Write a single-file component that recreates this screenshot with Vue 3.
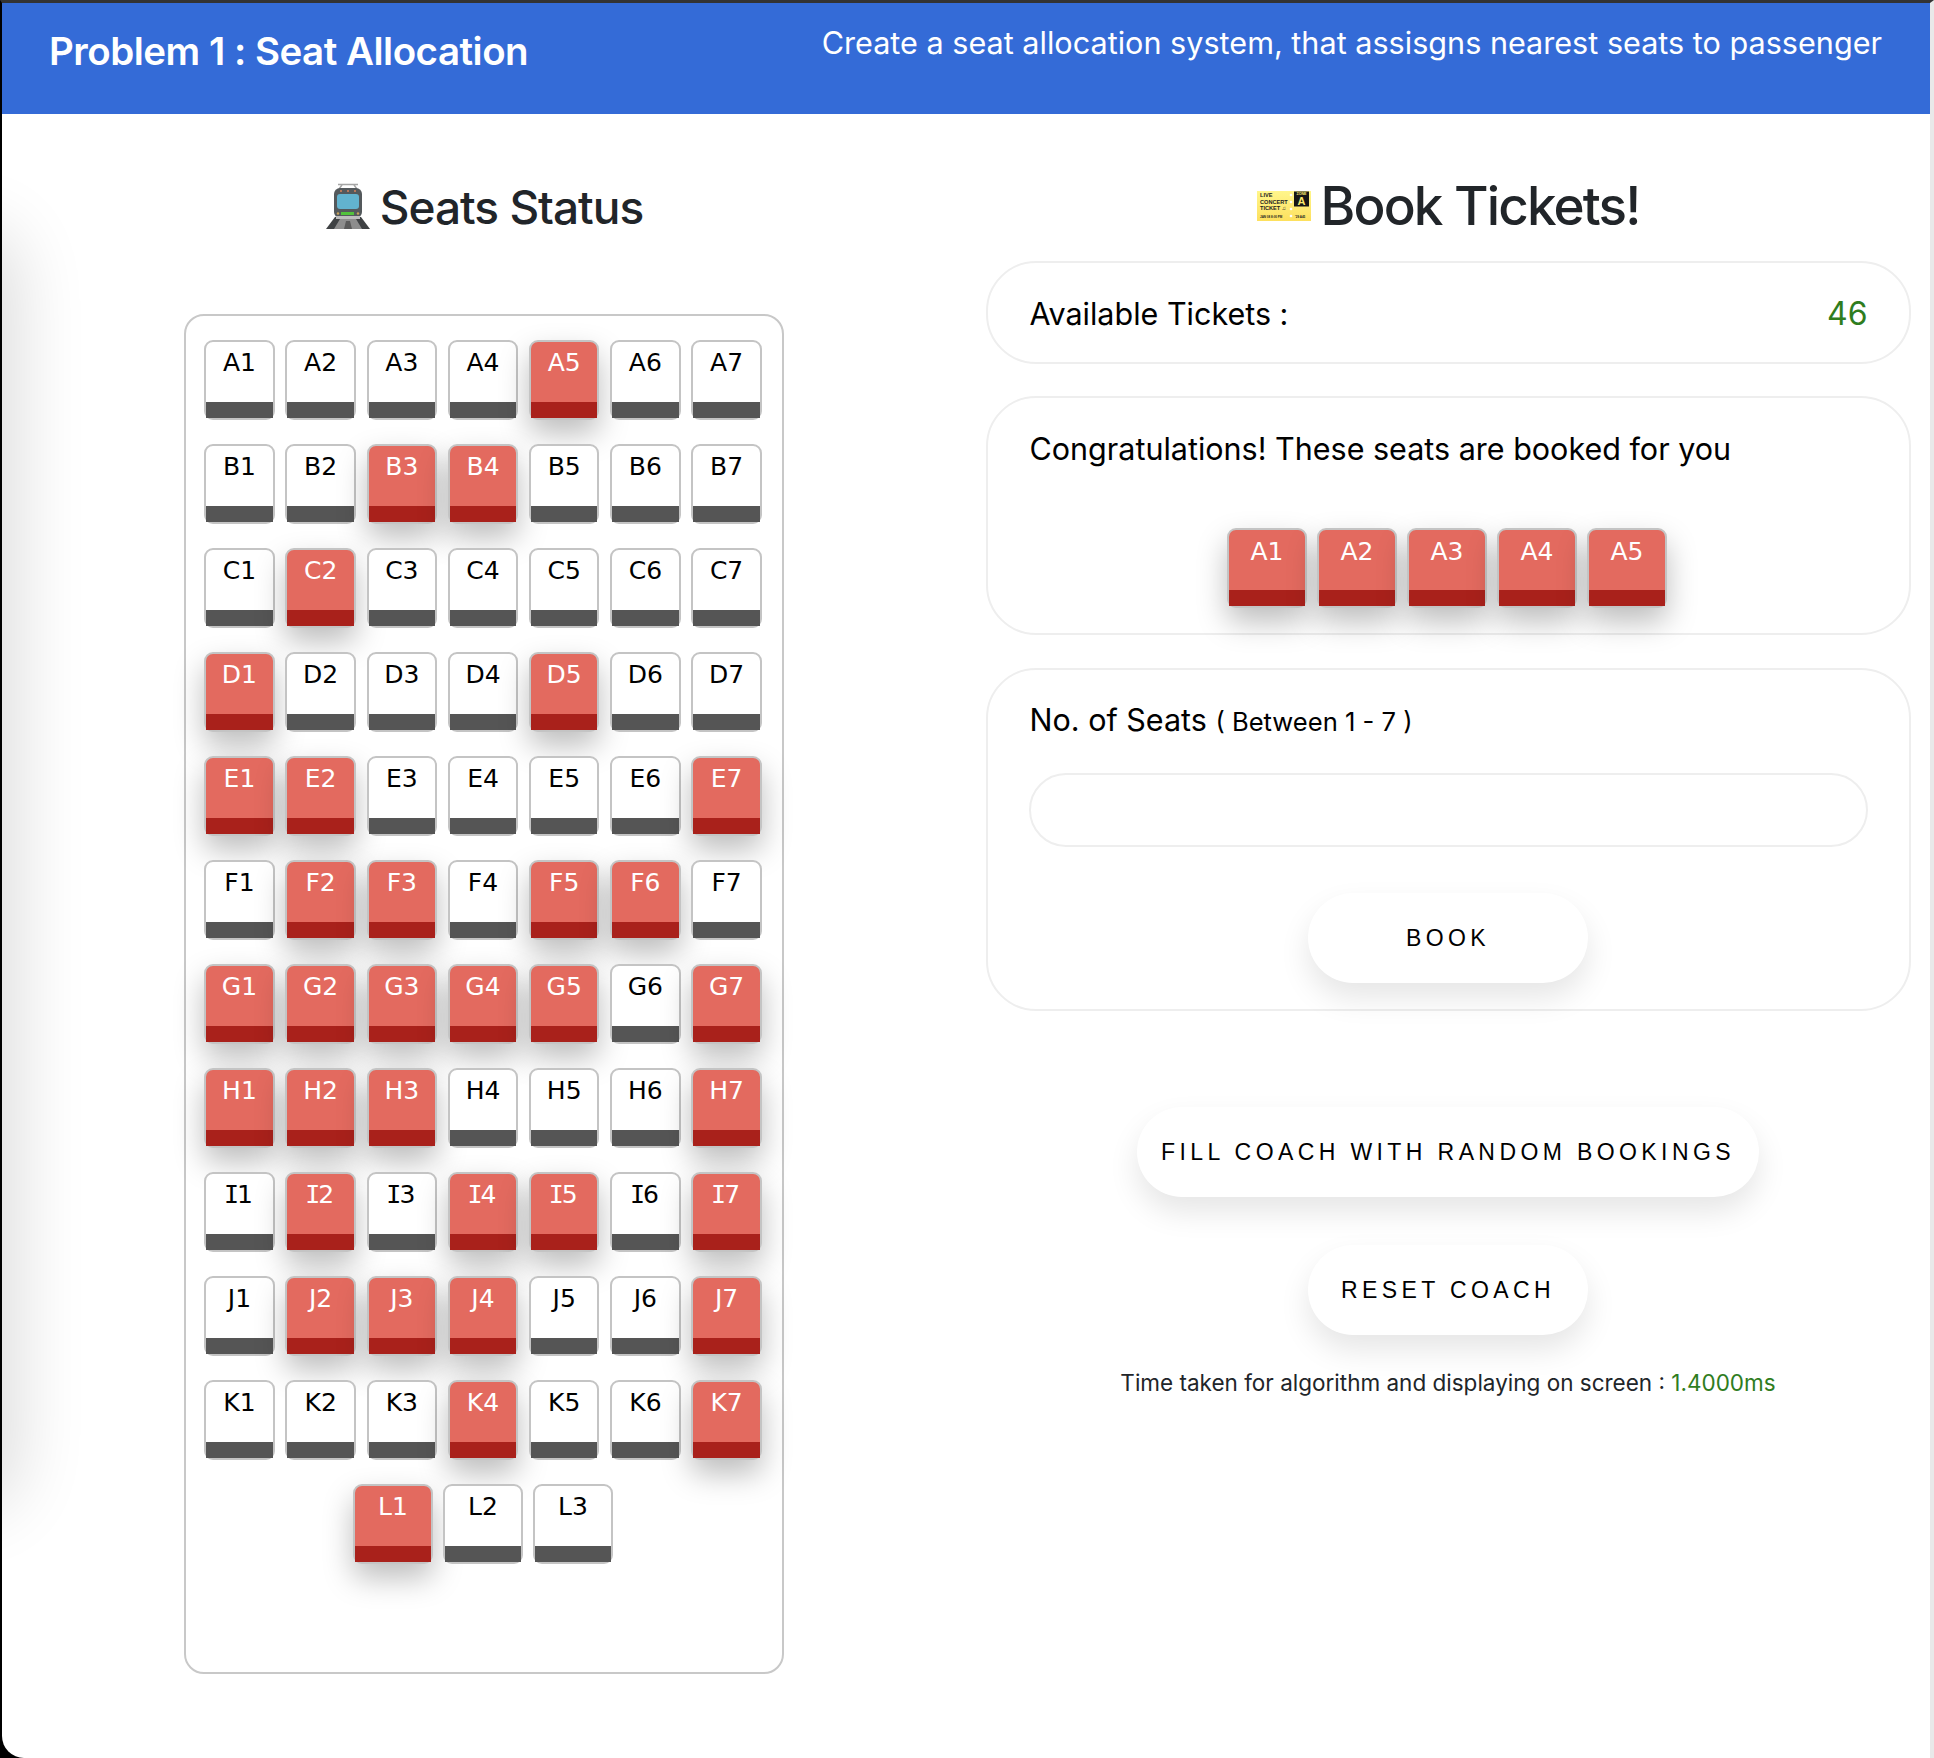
<template>
  <div class="shell">
    <div class="page">
      <header class="top-bar">
        <h1 class="top-title">Problem 1 : Seat Allocation</h1>
        <p class="top-desc">Create a seat allocation system, that assisgns nearest seats to passenger</p>
      </header>

      <main class="content">
        <section class="left-col">
          <h2 class="status-title">
            <svg class="train-icon" viewBox="0 0 44 46" width="44" height="46">
              <path d="M12 1.5h20M16 2l-3 4M28 2l3 4" stroke="#a5a5a5" stroke-width="1.4" fill="none"/>
              <path d="M9 34 L0 46 H44 L35 34Z" fill="#3f4244"/>
              <path d="M14 36 L8 46 H36 L30 36Z" fill="#8d8d8d"/>
              <path d="M20 38 L18 46 H26 L24 38Z" fill="#5a5a5a"/>
              <rect x="8" y="5" width="28" height="30" rx="6" fill="#54595c"/>
              <rect x="11" y="11" width="22" height="15" rx="3" fill="#62b3cf"/>
              <rect x="15" y="29" width="13" height="3" fill="#52c23c"/>
              <circle cx="12" cy="30.5" r="1.2" fill="#c9a45a"/>
              <circle cx="32" cy="30.5" r="1.2" fill="#c9a45a"/>
              <circle cx="15" cy="8" r="1" fill="#d9835a"/>
              <circle cx="22" cy="8" r="1" fill="#d9835a"/>
              <circle cx="29" cy="8" r="1" fill="#d9835a"/>
              <rect x="10" y="33" width="24" height="3" fill="#bdbdbd"/>
            </svg>
            Seats Status
          </h2>
          <div class="coach">
            <div v-for="row in rows" :key="row.name" class="seat-row" :class="{ 'last-row': row.seats.length < 7 }">
              <div v-for="seat in row.seats" :key="seat.num" class="seat" :class="{ booked: seat.booked }">
                <span :class="{ 'letter-i': row.name === 'I' }">{{ row.name }}</span>{{ seat.num }}
              </div>
            </div>
          </div>
        </section>

        <section class="right-col">
          <h2 class="book-title">
            <svg class="ticket-icon" viewBox="0 0 54 30" width="54" height="30">
              <defs>
                <linearGradient id="ticketFill" x1="0" y1="0" x2="0" y2="1">
                  <stop offset="0%" stop-color="#fff68c"/>
                  <stop offset="100%" stop-color="#fde05e"/>
                </linearGradient>
              </defs>
              <rect x="0" y="0" width="54" height="30" fill="url(#ticketFill)"/>
              <rect x="37" y="0.5" width="15" height="15" fill="#161616"/>
              <text x="44.5" y="4.4" class="tk-zone">ZONE</text>
              <text x="44.5" y="14" class="tk-a">A</text>
              <text x="3" y="6.2" class="tk">LIVE</text>
              <text x="3" y="12.8" class="tk">CONCERT</text>
              <text x="3" y="19.4" class="tk">TICKET ♫</text>
              <text x="3" y="27" class="tk-s">JAN 08 8:00 PM</text>
              <text x="38" y="27" class="tk-s">'29 A45</text>
              <circle cx="34" cy="4" r="1.3" fill="#fff"/>
              <circle cx="34" cy="11" r="1.3" fill="#fff"/>
              <circle cx="34" cy="18" r="1.3" fill="#fff"/>
              <circle cx="34" cy="25" r="1.3" fill="#fff"/>
            </svg>
            Book Tickets!
          </h2>

          <div class="card card-tickets">
            <span>Available Tickets :</span>
            <span class="green count">46</span>
          </div>

          <div class="card card-booked">
            <p class="card-text">Congratulations! These seats are booked for you</p>
            <div class="booked-list">
              <div v-for="s in justBooked" :key="s" class="seat booked wide">{{ s }}</div>
            </div>
          </div>

          <div class="card card-form">
            <p class="card-text">No. of Seats <small>( Between 1 - 7 )</small></p>
            <input class="seat-input" type="text" />
            <button class="pill-btn book-btn">BOOK</button>
          </div>

          <button class="pill-btn fill-btn">FILL COACH WITH RANDOM BOOKINGS</button>
          <button class="pill-btn reset-btn">RESET COACH</button>
          <p class="time-note">Time taken for algorithm and displaying on screen : <span class="green">1.4000ms</span></p>
        </section>
      </main>
      <div class="edge-shadow"></div>
    </div>
  </div>
</template>

<script setup>
const bookedMap = {
  A: [5],
  B: [3, 4],
  C: [2],
  D: [1, 5],
  E: [1, 2, 7],
  F: [2, 3, 5, 6],
  G: [1, 2, 3, 4, 5, 7],
  H: [1, 2, 3, 7],
  I: [2, 4, 5, 7],
  J: [2, 3, 4, 7],
  K: [4, 7],
  L: [1]
}

const rows = Object.keys(bookedMap).map((name) => {
  const count = name === 'L' ? 3 : 7
  const seats = []
  for (let i = 1; i <= count; i++) {
    seats.push({ num: i, booked: bookedMap[name].includes(i) })
  }
  return { name, seats }
})

const justBooked = ['A1', 'A2', 'A3', 'A4', 'A5']
</script>

<style scoped>
.shell {
  width: 1934px;
  height: 1758px;
  box-sizing: border-box;
  background: #000;
  border-top: 3px solid #333;
  border-left: 2px solid #000;
  border-right: 4px solid #e9e9e9;
}

.page {
  position: relative;
  height: 100%;
  background: #fff;
  border-bottom-left-radius: 22px;
  overflow: hidden;
  font-family: Inter, "Liberation Sans", sans-serif;
  color: #000;
}

.top-bar {
  height: 111px;
  background: #346bd7;
  color: #fff;
  display: flex;
  justify-content: space-between;
  padding: 0 48px 0 47px;
}

.top-title {
  margin: 25px 0 0;
  font-size: 38.5px;
  font-weight: 600;
  letter-spacing: -0.5px;
}

.top-desc {
  margin: 21px 0 0;
  font-size: 30.6px;
  font-weight: 400;
}

.content {
  display: flex;
}

.left-col {
  width: 966px;
  padding-left: 181.5px;
  box-sizing: border-box;
}

.status-title {
  display: flex;
  align-items: center;
  justify-content: center;
  gap: 10px;
  width: 600px;
  height: 60px;
  margin: 63px 0 0;
  padding-left: 2px;
  box-sizing: border-box;
  font-size: 46px;
  font-weight: 500;
  letter-spacing: -1px;
  color: #212529;
}

.train-icon {
  margin-bottom: 3px;
}

.coach {
  width: 600px;
  height: 1360px;
  margin-top: 77px;
  box-sizing: border-box;
  border: 2px solid #c8c8c8;
  border-radius: 20px;
  padding: 24px 1px 0 0;
}

.seat-row {
  display: flex;
  justify-content: center;
  gap: 10.7px;
  margin-bottom: 24px;
}

.last-row {
  gap: 10.5px;
}

.seat {
  width: 70.5px;
  height: 80px;
  box-sizing: border-box;
  position: relative;
  flex-shrink: 0;
  background: #fff;
  border: 2px solid #c4c4c4;
  border-radius: 9px;
  padding-top: 5px;
  font-family: "DejaVu Sans", sans-serif;
  font-size: 25px;
  line-height: 32px;
  text-align: center;
  color: #000;
}

.letter-i {
  font-family: "DejaVu Sans Mono", monospace;
  margin: 0 -2px;
}

.last-row .seat,
.seat.wide {
  width: 79.5px;
}

.seat.wide {
  padding-top: 6px;
}

.seat::after {
  content: '';
  position: absolute;
  left: 0;
  right: 0;
  bottom: 0;
  height: 16px;
  background: #555;
}

.seat.booked {
  background: #e36a5f;
  color: #fff;
  box-shadow: 0 14px 30px rgba(0, 0, 0, 0.26);
}

.seat.booked::after {
  background: #a9211b;
}

.right-col {
  width: 925px;
  margin-left: 17.5px;
  display: flex;
  flex-direction: column;
  align-items: center;
}

.book-title {
  display: flex;
  align-items: center;
  gap: 10px;
  height: 62px;
  margin: 61px 0 0;
  font-size: 53px;
  font-weight: 500;
  letter-spacing: -1.85px;
  color: #212529;
}

.card {
  width: 100%;
  box-sizing: border-box;
  border: 2px solid #eee;
  border-radius: 50px;
  font-size: 30.5px;
}

.card-tickets {
  height: 103px;
  margin-top: 24px;
  padding: 2px 41px 0 42px;
  display: flex;
  align-items: center;
  justify-content: space-between;
}

.green {
  color: #2f7d1e;
}

.count {
  font-size: 32px;
}

.card-booked {
  height: 239px;
  margin-top: 32px;
  padding: 29px 42px 0;
}

.card-text {
  margin: 0;
  line-height: 44px;
}

.card-text small {
  font-size: 25.6px;
}

.booked-list {
  display: flex;
  justify-content: center;
  gap: 10.5px;
  margin-top: 57px;
  padding-right: 2px;
}

.card-form {
  height: 343px;
  margin-top: 33px;
  padding: 28px 41px 0;
  display: flex;
  flex-direction: column;
  align-items: center;
}

.card-form .card-text {
  align-self: flex-start;
  padding-left: 1px;
}

.seat-input {
  width: 100%;
  height: 74px;
  margin-top: 29px;
  box-sizing: border-box;
  flex-shrink: 0;
  border: 2px solid #eee;
  border-radius: 37px;
  outline: none;
}

.pill-btn {
  height: 90px;
  flex-shrink: 0;
  border: none;
  border-radius: 45px;
  padding-top: 3px;
  background: #fff;
  font-family: "Liberation Sans", sans-serif;
  font-size: 23px;
  letter-spacing: 4.4px;
  color: #000;
  box-shadow: 0 15px 30px rgba(0, 0, 0, 0.1);
}

.book-btn {
  width: 280px;
  margin-top: 46px;
  padding-top: 1px;
}

.fill-btn {
  width: 622px;
  margin-top: 95.5px;
}

.reset-btn {
  width: 280px;
  margin-top: 48px;
}

.time-note {
  margin: 34.5px 0 0;
  font-size: 22.5px;
  color: #212529;
}

.tk { font: 700 5.6px "Liberation Sans", sans-serif; fill: #222; letter-spacing: 0; }
.tk-s { font: 700 3px "Liberation Sans", sans-serif; fill: #222; letter-spacing: 0; }
.tk-zone { font: 700 3.6px "Liberation Sans", sans-serif; fill: #fbe96f; text-anchor: middle; letter-spacing: 0; }
.tk-a { font: 700 11px "Liberation Sans", sans-serif; fill: #fbe96f; text-anchor: middle; letter-spacing: 0; }

.edge-shadow {
  position: absolute;
  left: -70px;
  top: 240px;
  width: 70px;
  height: 1250px;
  border-radius: 30px;
  box-shadow: 0 0 70px 15px rgba(0, 0, 0, 0.14);
}
</style>
